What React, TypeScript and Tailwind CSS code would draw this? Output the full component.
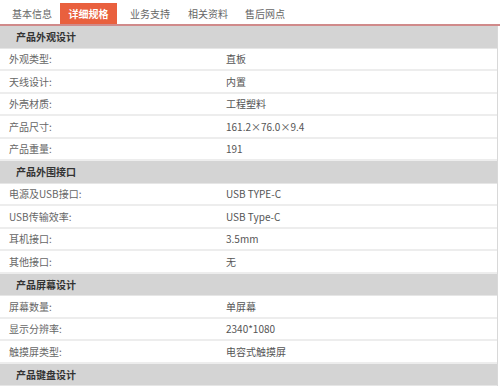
import React from "react";

type Row = { label: string; value: string };
type Section = { title: string; rows: Row[] };

const sections: Section[] = [
    {
        title: "产品外观设计",
        rows: [
            { label: "外观类型:", value: "直板" },
            { label: "天线设计:", value: "内置" },
            { label: "外壳材质:", value: "工程塑料" },
            { label: "产品尺寸:", value: "161.2×76.0×9.4" },
            { label: "产品重量:", value: "191" },
        ],
    },
    {
        title: "产品外围接口",
        rows: [
            { label: "电源及USB接口:", value: "USB TYPE-C" },
            { label: "USB传输效率:", value: "USB Type-C" },
            { label: "耳机接口:", value: "3.5mm" },
            { label: "其他接口:", value: "无" },
        ],
    },
    {
        title: "产品屏幕设计",
        rows: [
            { label: "屏幕数量:", value: "单屏幕" },
            { label: "显示分辨率:", value: "2340*1080" },
            { label: "触摸屏类型:", value: "电容式触摸屏" },
        ],
    },
    { title: "产品键盘设计", rows: [] },
];

function SpecRow({ row }: { row: Row }) {
    return (
        <div className="flex items-center h-[22.5px] border-b-2 border-[#ededed] bg-white text-[10px] text-[#666]">
            <div className="w-[226px] pl-[9px] shrink-0">{row.label}</div>
            <div className="text-[#555]">{row.value}</div>
        </div>
    );
}

export default function App() {
    return (
        <div
            className="w-[500px] h-[389px] overflow-hidden bg-white"
            style={{ fontFamily: '"Noto Sans CJK SC", "Noto Sans", sans-serif' }}
        >
            {/* tabs */}
            <div className="flex items-end h-[24px] pl-[12px] text-[10px] text-[#666]">
                <div className="flex items-center h-[21px] w-[48px]">基本信息</div>
                <div className="flex items-center justify-center h-[21px] w-[57px] bg-[#e9603e] text-white font-bold">
                    详细规格
                </div>
                <div className="flex items-center h-[21px] w-[58px] ml-[13px]">业务支持</div>
                <div className="flex items-center h-[21px] w-[57px]">相关资料</div>
                <div className="flex items-center h-[21px] w-[58px]">售后网点</div>
            </div>
            <div className="h-[2px] bg-[#d08a8a]" />
            <div className="w-[498px] border-r border-[#d8d8d8]">
                {sections.map((s) => (
                    <div key={s.title}>
                        <div className="flex items-center h-[22.5px] pl-[16px] bg-[#d4d4d4] border-b border-[#e6e6e6] text-[10px] font-bold text-[#333]">
                            {s.title}
                        </div>
                        {s.rows.map((r) => (
                            <SpecRow key={r.label} row={r} />
                        ))}
                    </div>
                ))}
            </div>
        </div>
    );
}
